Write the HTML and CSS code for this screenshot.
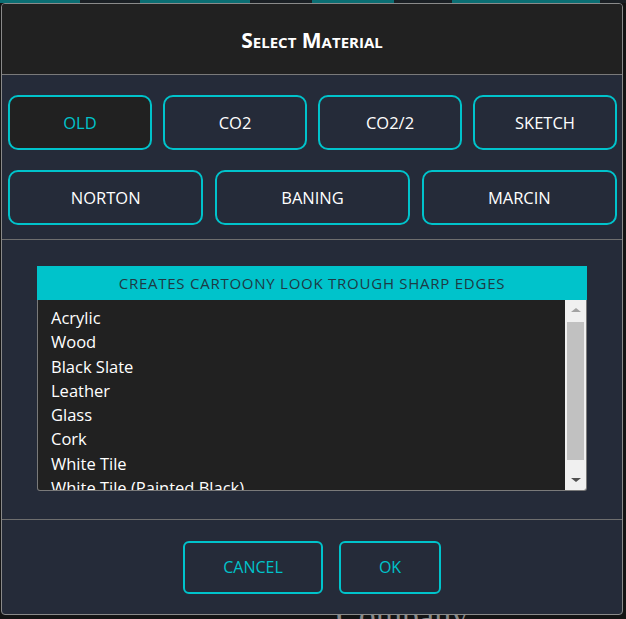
FILE: index.html
```html
<!DOCTYPE html>
<html>
<head>
<meta charset="utf-8">
<link rel="stylesheet" href="styles.css">
</head>
<body>
<div class="backdrop">
  <div class="bg-strip"><span class="t1"></span><span class="t2"></span><span class="t3"></span><span class="t4"></span></div>
  <div class="bg-company">Company</div>
</div>
<div class="dialog">
  <div class="dialog-header">Select Material</div>
  <div class="dialog-body">
    <div class="presets">
      <div class="preset-row four">
        <button class="preset active">OLD</button>
        <button class="preset">CO2</button>
        <button class="preset">CO2/2</button>
        <button class="preset">SKETCH</button>
      </div>
      <div class="preset-row three">
        <button class="preset">NORTON</button>
        <button class="preset">BANING</button>
        <button class="preset">MARCIN</button>
      </div>
    </div>
    <div class="materials">
      <div class="caption">CREATES CARTOONY LOOK TROUGH SHARP EDGES</div>
      <div class="listbox">
        <ul class="items">
          <li>Acrylic</li>
          <li>Wood</li>
          <li>Black Slate</li>
          <li>Leather</li>
          <li>Glass</li>
          <li>Cork</li>
          <li>White Tile</li>
          <li>White Tile (Painted Black)</li>
          <li>Paper</li>
        </ul>
        <div class="scrollbar">
          <div class="arrow up"></div>
          <div class="track"><div class="thumb"></div></div>
          <div class="arrow down"></div>
        </div>
      </div>
    </div>
  </div>
  <div class="dialog-footer">
    <button class="action cancel">CANCEL</button>
    <button class="action ok">OK</button>
  </div>
</div>
</body>
</html>
```

FILE: styles.css
```css
* { box-sizing: border-box; }
html, body { margin: 0; padding: 0; }
body {
  width: 626px;
  height: 619px;
  overflow: hidden;
  background: #141414;
  font-family: "Open Sans", "Noto Sans", sans-serif;
  position: relative;
  padding: 3px 4px 0 1px;
}
.backdrop { position: absolute; inset: 0; z-index: 0; }
.bg-strip { position: absolute; left: 0; top: 0; width: 626px; height: 3px; background: #1a1f24; }
.bg-strip span { position: absolute; top: 0; height: 3px; background: #0b6f74; }
.bg-strip .t1 { left: 0; width: 80px; }
.bg-strip .t2 { left: 140px; width: 110px; }
.bg-strip .t3 { left: 312px; width: 82px; }
.bg-strip .t4 { left: 452px; width: 148px; }
.bg-company {
  position: absolute;
  left: 336px;
  top: 597px;
  font-family: "Liberation Serif", serif;
  font-size: 34px;
  color: #8a8a8a;
}
.dialog {
  position: relative;
  z-index: 1;
  width: 622px;
  height: 612px;
  border: 1px solid #8a8a8a;
  border-radius: 4px;
  background: #252b39;
  display: flex;
  flex-direction: column;
  overflow: hidden;
}
.dialog-header {
  height: 71px;
  flex: none;
  background: #212121;
  border-bottom: 1px solid #7a7a7a;
  color: #ffffff;
  font-weight: 700;
  font-variant: small-caps;
  font-size: 21px;
  display: flex;
  align-items: center;
  justify-content: center;
  padding-top: 2px;
}
.dialog-body { flex: none; }
.presets {
  padding: 20px 5px 14px 6px;
  border-bottom: 1px solid #6e6e6e;
  display: flex;
  flex-direction: column;
  gap: 20px;
}
.preset-row { display: grid; gap: 11px; }
.preset-row.four { grid-template-columns: repeat(4, 1fr); }
.preset-row.three { grid-template-columns: repeat(3, 1fr); gap: 11.5px; }
.preset {
  height: 55px;
  border: 2px solid #00c3cb;
  border-radius: 10px;
  background: #252b39;
  color: #ffffff;
  font-family: "Open Sans", "Noto Sans", sans-serif;
  font-size: 16.5px;
  padding: 0;
}
.preset.active { background: #212121; color: #00c3cb; }
.materials {
  padding: 26px 35px 28px 35px;
  border-bottom: 1px solid #6e6e6e;
}
.caption {
  height: 34px;
  background: #00c3cb;
  color: #1e3a44;
  font-size: 15px;
  letter-spacing: 0.75px;
  display: flex;
  align-items: center;
  justify-content: center;
}
.listbox {
  height: 191px;
  background: #212121;
  border: 1px solid #7a7a7a;
  border-top: none;
  border-radius: 0 0 3px 3px;
  display: flex;
  overflow: hidden;
}
.items {
  flex: 1;
  list-style: none;
  margin: 0;
  padding: 6px 0 0 13px;
  color: #ffffff;
  font-size: 16.5px;
  line-height: 24.3px;
  overflow: hidden;
}
.scrollbar {
  width: 21px;
  flex: none;
  background: #f0f0f0;
  display: flex;
  flex-direction: column;
  align-items: center;
}
.arrow { height: 20px; width: 100%; display: flex; align-items: center; justify-content: center; }
.arrow.up::before {
  content: "";
  border-left: 5px solid transparent;
  border-right: 5px solid transparent;
  border-bottom: 4px solid #a3a3a3;
}
.arrow.down::before {
  content: "";
  border-left: 5px solid transparent;
  border-right: 5px solid transparent;
  border-top: 4px solid #505050;
}
.track { flex: 1; width: 100%; padding: 2px 2px 10px 2px; }
.thumb { height: 100%; background: #c1c1c1; }
.dialog-footer {
  flex: 1;
  display: flex;
  justify-content: center;
  align-items: center;
  gap: 16px;
}
.action {
  height: 53px;
  border: 2px solid #00c3cb;
  border-radius: 6px;
  background: #252b39;
  color: #00c3cb;
  font-family: "Open Sans", "Noto Sans", sans-serif;
  font-size: 16px;
  padding: 0;
}
.action.cancel { width: 140px; }
.action.ok { width: 102px; }
```
